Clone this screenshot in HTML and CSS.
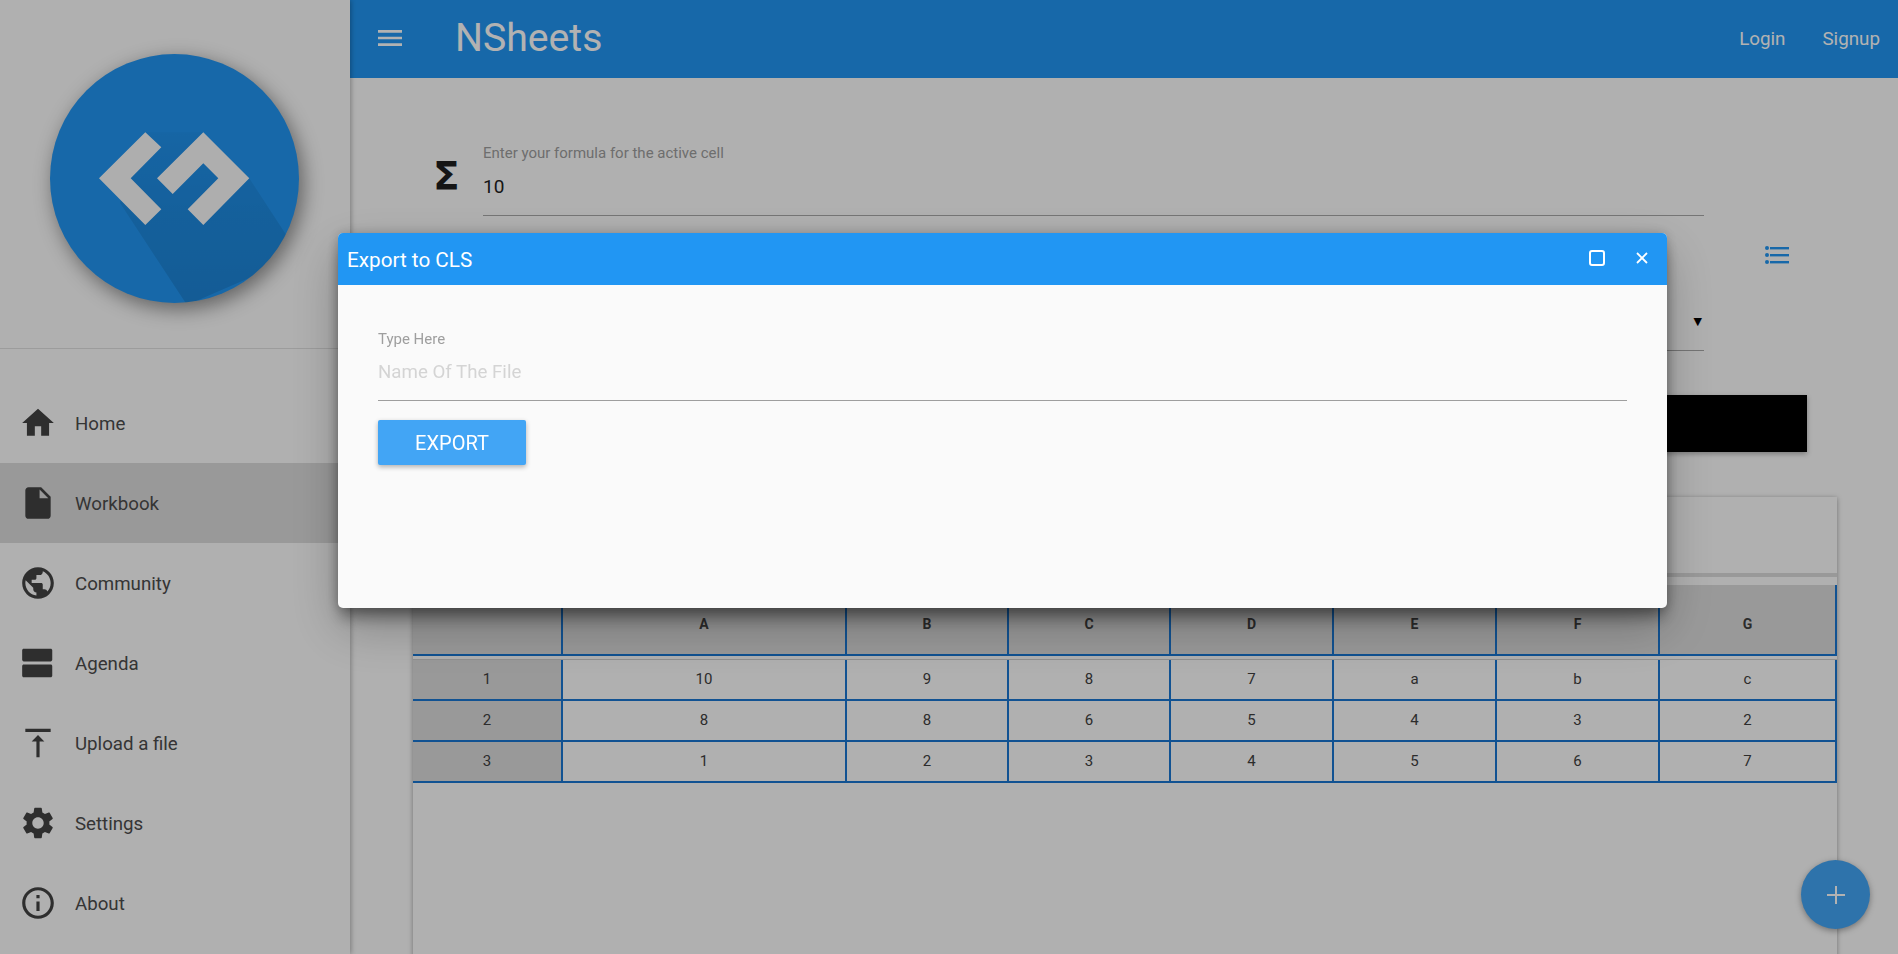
FILE: index.html
```html
<!DOCTYPE html>
<html lang="en">
<head>
  <meta charset="UTF-8" />
  <meta name="viewport" content="width=device-width, initial-scale=1" />
  <title>NSheets</title>
  <link rel="stylesheet" href="styles.css">
</head>
<body>
  <div class="app">
    <aside class="sidebar">
      <div class="logo-box">
        <svg class="logo" viewBox="45 49 260 260" width="260" height="260">
          <defs>
            <clipPath id="logoClip"><circle cx="174.5" cy="178.5" r="124.5" /></clipPath>
            <linearGradient id="logoShade" x1="0" y1="0" x2="0" y2="1">
              <stop offset="0" stop-color="#000" stop-opacity="0.03" />
              <stop offset="0.45" stop-color="#000" stop-opacity="0.08" />
              <stop offset="1" stop-color="#000" stop-opacity="0.12" />
            </linearGradient>
          </defs>
          <circle cx="174.5" cy="178.5" r="124.5" fill="#2196f3" />
          <polygon clip-path="url(#logoClip)" fill="url(#logoShade)" points="120,203 187,305 300,256 249.3,178.3 203.3,132.3 145,132.3" />
          <polygon fill="#fafafa" points="145.3,132.3 99,178.3 145.3,225 161.3,209.3 130.7,178.3 161.3,147.3" />
          <polygon fill="#fafafa" points="203.3,132.3 249.3,178.3 203.3,225 187.7,209.3 218.3,178.3 203.3,163.3 172.7,194 157,178.3" />
        </svg>
      </div>
      <nav class="nav">
        <a class="nav-item">
          <svg class="nav-icon" viewBox="0 0 24 24"><path d="M10 20v-6h4v6h5v-8h3L12 3 2 12h3v8z" /></svg>
          <span>Home</span>
        </a>
        <a class="nav-item active">
          <svg class="nav-icon" viewBox="0 0 24 24"><path d="M6 2c-1.1 0-2 .9-2 2v16c0 1.1.9 2 2 2h12c1.1 0 2-.9 2-2V8l-6-6H6zm7 7V3.5L18.5 9H13z" /></svg>
          <span>Workbook</span>
        </a>
        <a class="nav-item">
          <svg class="nav-icon" viewBox="0 0 24 24"><path d="M12 2C6.48 2 2 6.48 2 12s4.48 10 10 10 10-4.48 10-10S17.52 2 12 2zm-1 17.93c-3.95-.49-7-3.85-7-7.93 0-.62.08-1.21.21-1.79L9 15v1c0 1.1.9 2 2 2v1.93zm6.9-2.54c-.26-.81-1-1.39-1.9-1.39h-1v-3c0-.55-.45-1-1-1H8v-2h2c.55 0 1-.45 1-1V7h2c1.1 0 2-.9 2-2v-.41c2.93 1.19 5 4.06 5 7.41 0 2.08-.8 3.97-2.1 5.39z" /></svg>
          <span>Community</span>
        </a>
        <a class="nav-item">
          <svg class="nav-icon" viewBox="0 0 24 24"><path d="M20 13H3c-.55 0-1 .45-1 1v6c0 .55.45 1 1 1h17c.55 0 1-.45 1-1v-6c0-.55-.45-1-1-1zm0-10H3c-.55 0-1 .45-1 1v6c0 .55.45 1 1 1h17c.55 0 1-.45 1-1V4c0-.55-.45-1-1-1z" /></svg>
          <span>Agenda</span>
        </a>
        <a class="nav-item">
          <svg class="nav-icon" viewBox="0 0 24 24"><path d="M8 11h3v10h2V11h3l-4-4-4 4zM4 3v2h16V3H4z" /></svg>
          <span>Upload a file</span>
        </a>
        <a class="nav-item">
          <svg class="nav-icon" viewBox="0 0 24 24"><path d="M19.14 12.94c.04-.3.06-.61.06-.94 0-.32-.02-.64-.07-.94l2.03-1.58c.18-.14.23-.41.12-.61l-1.92-3.32c-.12-.22-.37-.29-.59-.22l-2.39.96c-.5-.38-1.03-.7-1.62-.94l-.36-2.54c-.04-.24-.24-.41-.48-.41h-3.84c-.24 0-.43.17-.47.41l-.36 2.54c-.59.24-1.13.57-1.62.94l-2.39-.96c-.22-.08-.47 0-.59.22L2.74 8.87c-.12.21-.08.47.12.61l2.03 1.58c-.05.3-.09.63-.09.94s.02.64.07.94l-2.03 1.58c-.18.14-.23.41-.12.61l1.92 3.32c.12.22.37.29.59.22l2.39-.96c.5.38 1.03.7 1.62.94l.36 2.54c.05.24.24.41.48.41h3.84c.24 0 .44-.17.47-.41l.36-2.54c.59-.24 1.13-.56 1.62-.94l2.39.96c.22.08.47 0 .59-.22l1.92-3.32c.12-.22.07-.47-.12-.61l-2.01-1.58zM12 15.6c-1.98 0-3.6-1.62-3.6-3.6s1.62-3.6 3.6-3.6 3.6 1.62 3.6 3.6-1.62 3.6-3.6 3.6z" /></svg>
          <span>Settings</span>
        </a>
        <a class="nav-item">
          <svg class="nav-icon" viewBox="0 0 24 24"><path d="M11 17h2v-6h-2v6zm1-15C6.48 2 2 6.48 2 12s4.48 10 10 10 10-4.48 10-10S17.52 2 12 2zm0 18c-4.41 0-8-3.59-8-8s3.59-8 8-8 8 3.59 8 8-3.59 8-8 8zM11 9h2V7h-2v2z" /></svg>
          <span>About</span>
        </a>
      </nav>
    </aside>

    <div class="content">
      <header class="topbar">
        <svg class="menu-icon" viewBox="0 0 24 24"><path d="M3 18h18v-2H3v2zm0-5h18v-2H3v2zm0-7v2h18V6H3z" /></svg>
        <h1 class="brand">NSheets</h1>
        <div class="topbar-links">
          <a>Login</a>
          <a>Signup</a>
        </div>
      </header>

      <main class="main">
        <div class="formula-row">
          <span class="sigma">Σ</span>
          <div class="field">
            <label class="field-label">Enter your formula for the active cell</label>
            <div class="field-value">10</div>
          </div>
        </div>

        <div class="select-row">
          <div class="select-field"><span class="select-arrow">▼</span></div>
          <svg class="list-icon" viewBox="0 0 24 18">
            <circle cx="2" cy="2" r="2" />
            <circle cx="2" cy="9" r="2" />
            <circle cx="2" cy="16" r="2" />
            <rect x="5" y="1" width="19" height="2.4" />
            <rect x="5" y="8" width="19" height="2.4" />
            <rect x="5" y="15" width="19" height="2.4" />
          </svg>
        </div>

        <div class="black-button"></div>

        <section class="sheet-card">
          <div class="sheet-toolbar"></div>
          <table class="sheet">
            <colgroup>
              <col class="col-head"><col class="col-a"><col class="col-n"><col class="col-n">
              <col class="col-w"><col class="col-w"><col class="col-w"><col>
            </colgroup>
            <thead>
              <tr><th></th><th>A</th><th>B</th><th>C</th><th>D</th><th>E</th><th>F</th><th>G</th></tr>
            </thead>
            <tbody>
              <tr class="gap-row"><td colspan="8"></td></tr>
              <tr><td class="row-head">1</td><td>10</td><td>9</td><td>8</td><td>7</td><td>a</td><td>b</td><td>c</td></tr>
              <tr><td class="row-head">2</td><td>8</td><td>8</td><td>6</td><td>5</td><td>4</td><td>3</td><td>2</td></tr>
              <tr><td class="row-head">3</td><td>1</td><td>2</td><td>3</td><td>4</td><td>5</td><td>6</td><td>7</td></tr>
            </tbody>
          </table>
        </section>
      </main>
    </div>

    <button class="fab">
      <svg viewBox="0 0 20 20" width="20" height="20"><path d="M9 1h2v8h8v2h-8v8H9v-8H1V9h8z" /></svg>
    </button>
  </div>

  <div class="overlay"></div>

  <div class="dialog">
    <div class="dialog-head">
      <span class="dialog-title">Export to CLS</span>
      <span class="dialog-maximize"></span>
      <svg class="dialog-close" viewBox="0 0 12 12" width="12" height="12"><path d="M1 1l10 10M11 1L1 11" /></svg>
    </div>
    <div class="dialog-body">
      <label class="dialog-label" for="fileName">Type Here</label>
      <input class="dialog-input" id="fileName" placeholder="Name Of The File" />
      <button class="export-button">EXPORT</button>
    </div>
  </div>
</body>
</html>
```

FILE: styles.css
```css
:root {
  --background: #fcfcfc;
  --primary: #2196f3;
  --primary-light: #42a5f5;
  --grid: #1976d2;
  --shade: #dcdcdc;
  --text: #4c4c4c;
}

* {
  box-sizing: border-box;
}

html, body {
  margin: 0;
  height: 100%;
  overflow: hidden;
}

body {
  font-family: Roboto, sans-serif;
  background-color: var(--background);
  color: var(--text);
}

.app {
  display: flex;
  height: 954px;
  overflow: hidden;
}

/* sidebar */
.sidebar {
  flex: 0 0 350px;
  background-color: var(--background);
  box-shadow: 1px 0 5px rgba(0, 0, 0, 0.3);
  z-index: 2;
}

.logo-box {
  height: 349px;
  padding-top: 49px;
  display: flex;
  justify-content: center;
  align-items: flex-start;
  border-bottom: 1px solid #e0e0e0;
}

.logo {
  display: block;
  filter: drop-shadow(4px 6px 10px rgba(0, 0, 0, 0.45));
}

.nav {
  margin-top: 34px;
}

.nav-item {
  height: 80px;
  display: flex;
  align-items: center;
  gap: 18px;
  padding-left: 19px;
  font-size: 18.7px;
}

.nav-item span {
  padding-top: 2px;
}

.nav-item.active {
  background-color: var(--shade);
}

.nav-icon {
  width: 38px;
  height: 38px;
  fill: #424242;
}

/* top bar */
.content {
  flex: 1;
  min-width: 0;
}

.topbar {
  height: 78px;
  display: flex;
  align-items: center;
  padding: 0 18px 0 24px;
  background-color: var(--primary);
  color: #ffffff;
}

.menu-icon {
  width: 32px;
  height: 32px;
  margin-top: -2px;
  fill: #ffffff;
}

.brand {
  margin: -2px 0 0 49px;
  font-size: 39.2px;
  font-weight: 400;
}

.topbar-links {
  margin-left: auto;
  display: flex;
  gap: 37px;
  font-size: 18.8px;
}

/* form area */
.formula-row {
  display: flex;
  margin-top: 65px;
  padding-left: 83px;
}

.sigma {
  width: 50px;
  padding-top: 14px;
  font-family: "DejaVu Sans", sans-serif;
  font-size: 39px;
  font-weight: 700;
  line-height: 40px;
  color: #1f1f1f;
}

.field {
  width: 1221px;
  height: 73px;
  border-bottom: 1px solid #a8a8a8;
}

.field-label {
  display: block;
  font-size: 15px;
  line-height: 20px;
  color: #9e9e9e;
}

.field-value {
  margin-top: 10px;
  font-size: 19px;
  line-height: 28px;
  color: #222222;
}

.select-row {
  display: flex;
  align-items: flex-start;
  padding-left: 133px;
}

.select-field {
  width: 1221px;
  height: 135px;
  display: flex;
  justify-content: flex-end;
  align-items: flex-end;
  padding: 0 2px 21px 0;
  border-bottom: 1px solid #a8a8a8;
}

.select-arrow {
  font-family: "DejaVu Sans", sans-serif;
  font-size: 11px;
  line-height: 14px;
  color: #000000;
}

.list-icon {
  width: 24px;
  height: 18px;
  margin: 30px 0 0 61px;
  fill: var(--primary);
}

.black-button {
  width: 1394px;
  height: 57px;
  margin: 44px 0 0 63px;
  background-color: #000000;
  box-shadow: 0 2px 5px rgba(0, 0, 0, 0.3);
}

/* sheet */
.sheet-card {
  width: 1424px;
  height: 500px;
  margin: 45px 0 0 63px;
  background-color: var(--background);
  box-shadow: 0 1px 5px rgba(0, 0, 0, 0.35);
}

.sheet-toolbar {
  height: 80px;
  margin-bottom: 8px;
  border-bottom: 4px solid #dcdcdc;
}

.sheet {
  width: 100%;
  table-layout: fixed;
  border-collapse: separate;
  border-spacing: 0;
  font-size: 15px;
  color: #404040;
}

.col-head { width: 150px; }
.col-a { width: 284px; }
.col-n { width: 162px; }
.col-w { width: 163px; }

.sheet th, .sheet td {
  padding: 0;
  text-align: center;
  border-right: 2px solid var(--grid);
  border-bottom: 2px solid var(--grid);
}

.sheet th {
  height: 71px;
  padding-top: 9px;
  font-size: 14px;
  font-weight: 700;
  background-color: var(--shade);
}

.sheet td {
  height: 41px;
  padding-bottom: 1px;
}

.sheet .gap-row td {
  height: 4px;
  padding: 0;
  border-right: none;
  border-bottom: 1px solid #cfcfcf;
}

.sheet .row-head {
  background-color: var(--shade);
}

/* floating button */
.fab {
  position: absolute;
  left: 1801px;
  top: 860px;
  width: 69px;
  height: 69px;
  display: flex;
  justify-content: center;
  align-items: center;
  border: none;
  border-radius: 50%;
  background-color: var(--primary-light);
  box-shadow: 0 2px 6px rgba(0, 0, 0, 0.35);
  z-index: 3;
}

.fab svg {
  fill: #ffffff;
}

/* dialog */
.overlay {
  position: fixed;
  inset: 0;
  background-color: rgba(0, 0, 0, 0.3);
  z-index: 10;
}

.dialog {
  position: fixed;
  left: 338px;
  top: 233px;
  width: 1329px;
  height: 375px;
  border-radius: 5px;
  background-color: #fafafa;
  box-shadow: 0 12px 16px -3px rgba(0, 0, 0, 0.4), 0 20px 50px rgba(0, 0, 0, 0.25), 0 0 12px rgba(0, 0, 0, 0.2);
  z-index: 11;
}

.dialog-head {
  height: 52px;
  display: flex;
  align-items: center;
  padding: 0 19px 0 9px;
  border-radius: 5px 5px 0 0;
  background-color: var(--primary);
  color: #ffffff;
}

.dialog-title {
  margin-top: 1px;
  font-size: 20.7px;
}

.dialog-maximize {
  width: 16px;
  height: 16px;
  margin: -3px 31px 0 auto;
  border: 2px solid #ffffff;
  border-radius: 3px;
}

.dialog-close {
  margin-top: -3px;
  fill: none;
  stroke: #ffffff;
  stroke-width: 1.8;
}

.dialog-body {
  display: flex;
  flex-direction: column;
  align-items: flex-start;
  padding: 44px 40px 0;
}

.dialog-label {
  font-size: 15px;
  line-height: 20px;
  color: #9e9e9e;
}

.dialog-input {
  width: 100%;
  height: 52px;
  padding: 0 0 6px;
  border: none;
  border-bottom: 1px solid #9e9e9e;
  outline: none;
  background: transparent;
  font-family: Roboto, sans-serif;
  font-size: 18.7px;
}

.dialog-input::placeholder {
  color: #d4d4d4;
  opacity: 1;
}

.export-button {
  width: 148px;
  height: 45px;
  margin-top: 19px;
  border: none;
  border-radius: 2px;
  background-color: var(--primary-light);
  box-shadow: 0 2px 5px rgba(0, 0, 0, 0.3);
  color: #ffffff;
  font-family: Roboto, sans-serif;
  font-size: 20px;
}
```
